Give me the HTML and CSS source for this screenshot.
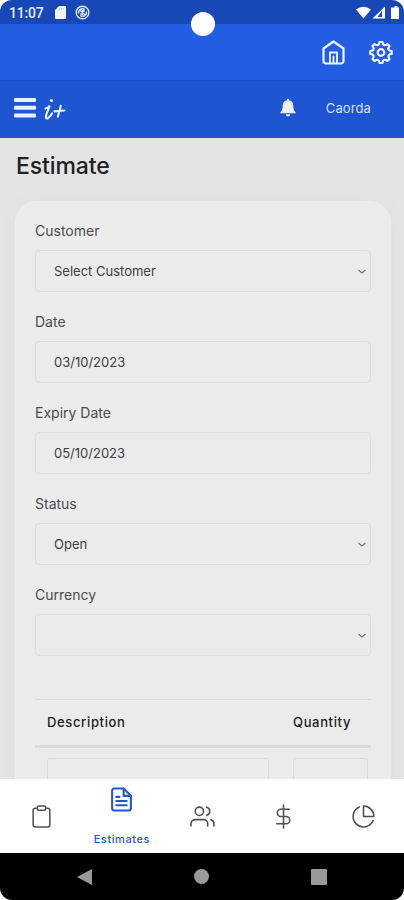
FILE: index.html
```html
<!DOCTYPE html>
<html lang="en">
<head>
    <meta charset="UTF-8">
    <meta name="viewport" content="width=device-width, initial-scale=1.0">
    <title>Estimate</title>
    <link rel="stylesheet" href="styles.css">
</head>
<body>
    <div class="screen">
        <div class="status-bar">
            <span class="time">11:07</span>
            <svg class="sd" width="11" height="13" viewBox="0 0 11 13"><path d="M4 0h6a1 1 0 0 1 1 1v11a1 1 0 0 1-1 1H1a1 1 0 0 1-1-1V4z" fill="#f4f6ff"/><path d="M4.500 2v2M6.500 2v2M8.500 2v2" stroke="#b5c5ef" stroke-width=".8"/></svg>
            <svg class="sync" width="15" height="15" viewBox="0 0 15 15" fill="none" stroke="#e3eaff" stroke-width="1.400"><circle cx="7.500" cy="7.500" r="6.300"/><path d="M3.600 8.500a4 4 0 0 1 6.200-4M11.400 6.500A4 4 0 0 1 5.200 10.500M4.500 4.500l6 6M7 5.800l2.800.2M5.200 9l2.800.2"/></svg>
            <svg class="signals" width="46" height="14" viewBox="0 0 46 14" fill="#fff">
                <path d="M0 3.400Q7.500-2 15 3.400L7.500 12.500z"/>
                <path d="M29 .5v12H16.500z"/><path d="M26 5v6h-4.500z" fill="#1748b5"/>
                <path d="M37 1.500h1.500V0h3v1.500H43V13h-8V1.500z"/>
            </svg>
            <span class="camera"></span>
        </div>

        <div class="app-bar">
            <svg width="23" height="25" viewBox="0 0 23 25" fill="none" stroke="#f3f6ff" stroke-width="2.200" stroke-linejoin="round" stroke-linecap="round"><path d="M1.500 8.500 11.500 1.500l10 7v12.500a2.500 2.500 0 0 1-2.500 2.500H4A2.500 2.500 0 0 1 1.500 21z"/><path d="M8 23V12.500h7V23M11.500 16.500v6.500" stroke-width="1.800"/></svg>
            <svg width="24" height="25" viewBox="0 0 24 24" fill="none" stroke="#f3f6ff" stroke-width="2.200" stroke-linejoin="round"><circle cx="12" cy="12" r="3.300"/><path d="M9 4.500Q10.500 4 10.500 1.500h3Q13.500 4 15 4.500T18.400 3.500L20.500 5.600Q18.800 7.500 19.500 9T22.700 10.500v3Q20 13.500 19.500 15T20.500 18.400L18.400 20.500Q16.500 18.900 15 19.500T13.500 22.500h-3Q10.500 20 9 19.500T5.600 20.500L3.500 18.400Q5.100 16.500 4.500 15T1.300 13.500v-3Q4 10.500 4.500 9T3.500 5.600L5.600 3.500Q7.500 5.100 9 4.500z"/></svg>
        </div>

        <header class="header">
            <svg class="menu" width="22" height="20" viewBox="0 0 22 20" fill="#e9effc"><rect width="22" height="4" rx="1"/><rect y="7.700" width="22" height="4" rx="1"/><rect y="15.400" width="22" height="4" rx="1"/></svg>
            <svg class="logo" width="22" height="23" viewBox="0 0 23 23" fill="none" stroke="#e9effc" stroke-linecap="round"><path d="M1.500 10.500C4 10 5.500 8.500 6 7.500 4.500 12 1.500 17 2 20c.5 2.600 4.500-.5 6.500-4.500" stroke-width="2.200"/><path d="M7.500 2.200h.6" stroke-width="2.800"/><path d="M11 13.500 21.500 12.500M17.500 7.500C17 12 15 16 14.500 19" stroke-width="2.200"/></svg>
            <svg class="bell" width="16" height="18" viewBox="0 0 16 18" fill="#edf1fb"><path d="M8 0c.8 0 1.200.5 1.200 1.200C12 1.800 13.300 4 13.300 7c0 3.600 1 4.600 2.500 6.500v.8H.2v-.8C1.700 11.600 2.700 10.600 2.700 7c0-3 1.300-5.200 4.100-5.800C6.800.5 7.200 0 8 0zM5.800 15.200h4.400a2.200 2.200 0 0 1-4.400 0z"/></svg>
            <span class="user">Caorda</span>
        </header>

        <main class="content">
            <h1>Estimate</h1>
            <form class="card">
                <div class="field">
                    <label for="customer">Customer</label>
                    <div class="control select">
                        <select id="customer"><option>Select Customer</option></select>
                        <svg class="chevron" viewBox="0 0 8 5"><path d="M.5 1 4 4l3.500-3"/></svg>
                    </div>
                </div>
                <div class="field">
                    <label for="date">Date</label>
                    <div class="control"><input id="date" type="text" value="03/10/2023"></div>
                </div>
                <div class="field">
                    <label for="expiry">Expiry Date</label>
                    <div class="control"><input id="expiry" type="text" value="05/10/2023"></div>
                </div>
                <div class="field">
                    <label for="status">Status</label>
                    <div class="control select">
                        <select id="status"><option>Open</option></select>
                        <svg class="chevron" viewBox="0 0 8 5"><path d="M.5 1 4 4l3.500-3"/></svg>
                    </div>
                </div>
                <div class="field">
                    <label for="currency">Currency</label>
                    <div class="control select">
                        <select id="currency"><option></option></select>
                        <svg class="chevron" viewBox="0 0 8 5"><path d="M.5 1 4 4l3.500-3"/></svg>
                    </div>
                </div>

                <div class="items">
                    <div class="items-head">
                        <span>Description</span>
                        <span>Quantity</span>
                    </div>
                    <div class="items-row">
                        <input type="text">
                        <input type="text">
                    </div>
                </div>
            </form>
        </main>

        <nav class="tabs">
            <a class="tab"><svg width="25" height="25" viewBox="0 0 24 24"><path d="M16 4h2a2 2 0 0 1 2 2v14a2 2 0 0 1-2 2H6a2 2 0 0 1-2-2V6a2 2 0 0 1 2-2h2"/><rect x="8" y="2" width="8" height="4" rx="1.500"/></svg></a>
            <a class="tab active">
                <svg width="25" height="25" viewBox="0 0 24 24"><path d="M14 1.500H5a2 2 0 0 0-2 2v17a2 2 0 0 0 2 2h14a2 2 0 0 0 2-2v-12z"/><path d="M14 1.500v7h7M7 9.500h3M7 13.500h10M7 17.500h10"/></svg>
                <span>Estimates</span>
            </a>
            <a class="tab"><svg width="25" height="25" viewBox="0 0 24 24"><path d="M17 21v-2a4 4 0 0 0-4-4H5a4 4 0 0 0-4 4v2M23 21v-2a4 4 0 0 0-3-3.870M16 3.130a4 4 0 0 1 0 7.750"/><circle cx="9" cy="7" r="4"/></svg></a>
            <a class="tab"><svg width="25" height="25" viewBox="0 0 24 24"><path d="M12 1v22M17.500 5H9.500a3.500 3.500 0 0 0 0 7h5a3.500 3.500 0 0 1 0 7H5.500"/></svg></a>
            <a class="tab"><svg width="25" height="25" viewBox="0 0 24 24"><path d="M21.210 15.890A10 10 0 1 1 8 2.830M22 12A10 10 0 0 0 12 2v10z"/></svg></a>
        </nav>

        <div class="system-nav">
            <svg width="15" height="16" viewBox="0 0 15 16"><path d="M15 0v16L0 8z"/></svg>
            <svg width="15" height="15" viewBox="0 0 15 15"><circle cx="7.500" cy="7.500" r="7.500"/></svg>
            <svg width="16" height="16" viewBox="0 0 16 16"><rect width="16" height="16" rx="1"/></svg>
        </div>
    </div>
</body>
</html>
```
FILE: styles.css
```css
* {
    box-sizing: border-box;
}

body {
    margin: 0;
    background: #fff;
    font-family: Inter, "Liberation Sans", sans-serif;
    color: #484d53;
}

.screen {
    width: 404px;
    height: 900px;
    display: flex;
    flex-direction: column;
    overflow: hidden;
    border-radius: 12px;
    background: #e4e4e5;
}

.status-bar {
    position: relative;
    flex: none;
    height: 24px;
    padding: 1px 6px 0 9px;
    display: flex;
    align-items: center;
    background: #1748b5;
}

.time {
    width: 46px;
    font: 500 14px Roboto, sans-serif;
    letter-spacing: -0.2px;
    color: #e5ebff;
}

.sync {
    margin-left: 9px;
}

.signals {
    margin-left: auto;
    margin-right: -4px;
}

.camera {
    position: absolute;
    left: 191px;
    top: 12px;
    width: 24px;
    height: 24px;
    border-radius: 50%;
    background: #fff;
}

.app-bar {
    flex: none;
    height: 56px;
    padding: 0 11px;
    display: flex;
    align-items: center;
    justify-content: flex-end;
    gap: 24px;
    background: #235de2;
}

.header {
    flex: none;
    height: 58px;
    padding: 0 33px 4px 14px;
    display: flex;
    align-items: center;
    background: #1e55d2;
    border-top: 1px solid #1c50c7;
}

.logo {
    margin: 4px 0 0 8px;
}

.bell {
    margin-left: auto;
    margin-right: 30px;
}

.user {
    font-size: 13px;
    letter-spacing: 0.1px;
    color: #d5e0fb;
}

.content {
    flex: 1;
    min-height: 0;
    padding: 0 13px 0 15px;
    overflow: hidden;
}

h1 {
    margin: 14px 0 20px 1px;
    font-size: 23px;
    line-height: 29px;
    font-weight: 500;
    letter-spacing: -0.1px;
    color: #202123;
}

.card {
    height: 640px;
    padding: 19px 20px 0;
    border-radius: 21px;
    background: #ebebeb;
    box-shadow: 0 0 12px rgba(215, 222, 225, 0.6);
}

.field {
    margin-bottom: 19px;
}

.field label {
    display: block;
    height: 21px;
    margin-bottom: 9px;
    font-size: 14px;
    line-height: 21px;
}

.control {
    position: relative;
    height: 42px;
}

.control input,
.control select {
    width: 100%;
    height: 100%;
    padding: 0 18px;
    border: 1px solid #dddede;
    border-radius: 4px;
    background: #ebebeb;
    font: 13px Inter, "Liberation Sans", sans-serif;
    color: #3d3f42;
    appearance: none;
    outline: none;
}

.chevron {
    position: absolute;
    right: 5px;
    top: 19px;
    width: 8px;
    height: 5px;
    fill: none;
    stroke: #707173;
    stroke-width: 1.1;
}

.items {
    margin-top: 43px;
    border-top: 1px solid #dadcdc;
}

.items-head,
.items-row {
    display: grid;
    grid-template-columns: 222px 75px;
    gap: 24px;
    padding: 0 12px;
}

.items-head {
    height: 48px;
    padding-bottom: 2px;
    align-items: center;
    border-bottom: 3px solid #dadcdc;
    font-size: 13px;
    font-weight: 500;
    letter-spacing: 0.65px;
    color: #202123;
}

.items-row {
    padding-top: 10px;
}

.items-row input {
    width: 100%;
    height: 42px;
    border: 1px solid #dadcdc;
    border-radius: 3px;
    background: #ebebeb;
}

.tabs {
    flex: none;
    height: 74px;
    padding-left: 1px;
    display: flex;
    background: #fff;
}

.tab {
    flex: 1;
    display: flex;
    flex-direction: column;
    align-items: center;
    justify-content: center;
}

.tab svg {
    fill: none;
    stroke: #505050;
    stroke-width: 1.5;
    stroke-linecap: round;
    stroke-linejoin: round;
}

.tab.active {
    justify-content: flex-start;
    padding-top: 8px;
    font-size: 11px;
    font-weight: 500;
    letter-spacing: 0.6px;
    color: #2452d8;
}

.tab.active svg {
    stroke: #2355dc;
    stroke-width: 2;
}

.tab.active span {
    margin-top: 20px;
}

.system-nav {
    flex: none;
    height: 47px;
    padding: 0 77px;
    display: flex;
    align-items: center;
    justify-content: space-between;
    background: #000;
}

.system-nav svg {
    fill: #999;
}
```
